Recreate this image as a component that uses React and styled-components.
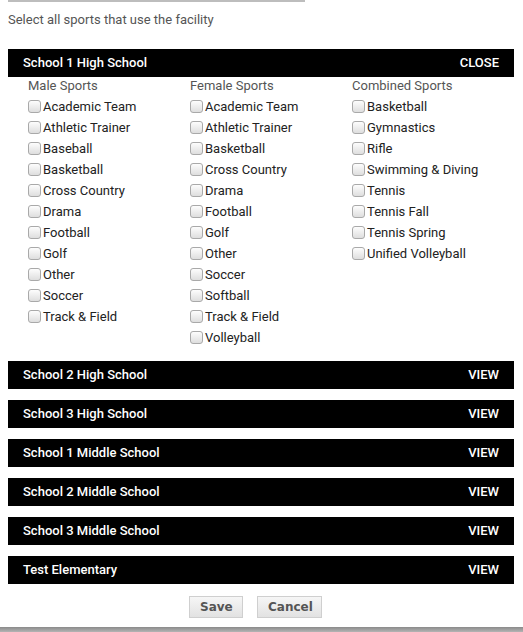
import React, { useState } from 'react'
import styled, { createGlobalStyle } from 'styled-components'

const GlobalStyle = createGlobalStyle`
    html, body {
        margin: 0;
        padding: 0;
        background: #fff;
        font-family: Roboto, "Liberation Sans", Arial, sans-serif;
    }
`

const Page = styled.div`
    width: 523px;
    height: 632px;
    display: flex;
    flex-direction: column;
    overflow: hidden;
`

const Content = styled.div`
    flex: 1;
    padding: 0 9px 0 8px;
`

const TopLine = styled.div`
    width: 297px;
    height: 2px;
    background: #bdbdbd;
`

const Intro = styled.p`
    margin: 10px 0 0;
    font-size: 13px;
    line-height: 15px;
    color: #555;
`

const Schools = styled.div`
    margin-top: 22px;
    display: flex;
    flex-direction: column;
    gap: 11px;
`

const Bar = styled.div`
    height: 28px;
    box-sizing: border-box;
    background: #000;
    color: #fff;
    display: flex;
    align-items: center;
    justify-content: space-between;
    padding: 0 15px 2px;
    font-size: 13px;
    font-weight: 500;
    cursor: pointer;
`

const Toggle = styled.span`
    text-transform: uppercase;
`

const Columns = styled.div`
    display: grid;
    grid-template-columns: repeat(3, 162px);
    padding: 0 0 2px 20px;
`

const Column = styled.div`
    display: flex;
    flex-direction: column;
`

const ColumnTitle = styled.div`
    font-size: 13px;
    line-height: 17px;
    margin-bottom: 2px;
    color: #555;
`

const Item = styled.label`
    display: flex;
    align-items: center;
    height: 21px;
    font-size: 13px;
    color: #222;
`

const Box = styled.input`
    appearance: none;
    width: 13px;
    height: 13px;
    margin: 0 2px 0 0;
    border: 1px solid #a9a9a9;
    border-radius: 3px;
    background: linear-gradient(#fdfdfd, #dedede);
    box-sizing: border-box;
    &:checked {
        background: linear-gradient(#6fa8e8, #3b7fd4);
        border-color: #3270c0;
    }
`

const Buttons = styled.div`
    display: flex;
    justify-content: center;
    gap: 14px;
    margin-top: 12px;
    padding-right: 11px;
`

const Button = styled.button`
    height: 22px;
    padding: 0 10px;
    border: 1px solid #cfcfcf;
    background: linear-gradient(#f6f6f6, #e2e2e2);
    color: #555;
    font-family: "DejaVu Sans", Verdana, sans-serif;
    font-weight: bold;
    font-size: 12px;
    width: ${props => props.w}px;
`

const BottomBar = styled.div`
    height: 5px;
    background: linear-gradient(#8a8a8a, #b4b4b4);
`

const sports = {
    'Male Sports': ['Academic Team', 'Athletic Trainer', 'Baseball', 'Basketball', 'Cross Country', 'Drama', 'Football', 'Golf', 'Other', 'Soccer', 'Track & Field'],
    'Female Sports': ['Academic Team', 'Athletic Trainer', 'Basketball', 'Cross Country', 'Drama', 'Football', 'Golf', 'Other', 'Soccer', 'Softball', 'Track & Field', 'Volleyball'],
    'Combined Sports': ['Basketball', 'Gymnastics', 'Rifle', 'Swimming & Diving', 'Tennis', 'Tennis Fall', 'Tennis Spring', 'Unified Volleyball'],
}

const schools = ['School 1 High School', 'School 2 High School', 'School 3 High School', 'School 1 Middle School', 'School 2 Middle School', 'School 3 Middle School', 'Test Elementary']

const App = () => {
    const [open, setOpen] = useState(0)

    return (
        <Page>
            <GlobalStyle />
            <Content>
                <TopLine />
                <Intro>Select all sports that use the facility</Intro>
                <Schools>
                    {schools.map((name, i) => (
                        <div key={name}>
                            <Bar onClick={() => setOpen(open === i ? -1 : i)}>
                                <span>{name}</span>
                                <Toggle>{open === i ? 'Close' : 'View'}</Toggle>
                            </Bar>
                            {open === i && (
                                <Columns>
                                    {Object.keys(sports).map(group => (
                                        <Column key={group}>
                                            <ColumnTitle>{group}</ColumnTitle>
                                            {sports[group].map(sport => (
                                                <Item key={sport}>
                                                    <Box type="checkbox" />
                                                    {sport}
                                                </Item>
                                            ))}
                                        </Column>
                                    ))}
                                </Columns>
                            )}
                        </div>
                    ))}
                </Schools>
                <Buttons>
                    <Button w={54}>Save</Button>
                    <Button w={65}>Cancel</Button>
                </Buttons>
            </Content>
            <BottomBar />
        </Page>
    )
}

export default App
